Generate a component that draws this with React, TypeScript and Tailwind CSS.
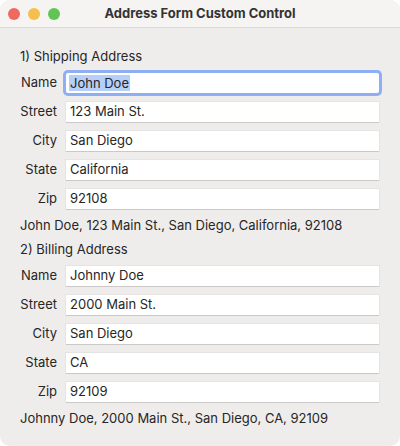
import { ReactNode } from 'react'

type Field = { label: string; value: string; focused?: boolean }

const shipping: Field[] = [
  { label: 'Name', value: 'John Doe', focused: true },
  { label: 'Street', value: '123 Main St.' },
  { label: 'City', value: 'San Diego' },
  { label: 'State', value: 'California' },
  { label: 'Zip', value: '92108' },
]

const billing: Field[] = [
  { label: 'Name', value: 'Johnny Doe' },
  { label: 'Street', value: '2000 Main St.' },
  { label: 'City', value: 'San Diego' },
  { label: 'State', value: 'CA' },
  { label: 'Zip', value: '92109' },
]

function Line({ children, className = '' }: { children: ReactNode; className?: string }) {
  return <div className={`h-4 leading-4 ${className}`}>{children}</div>
}

function FieldRow({ field }: { field: Field }) {
  return (
    <div className="flex h-5 items-center">
      <div className="w-[37px] shrink-0 text-right">{field.label}</div>
      <div
        className={
          field.focused
            ? 'ml-[9px] flex h-5 flex-1 items-center rounded-[2px] bg-white pl-[3px] shadow-[0_0_0_3px_#8eaff3]'
            : 'ml-[9px] flex h-5 flex-1 items-center bg-white pl-[3px] shadow-[0_1px_0_#cbc9c7,0_0_0_1px_#e6e4e2]'
        }
      >
        {field.focused ? (
          <span className="bg-[#b6cff8] px-px leading-4">{field.value}</span>
        ) : (
          <span className="px-px">{field.value}</span>
        )}
      </div>
    </div>
  )
}

function Section({ title, fields }: { title: string; fields: Field[] }) {
  const summary = fields.map((f) => f.value).join(', ')
  return (
    <div className="flex flex-col">
      <Line>{title}</Line>
      <div className="mt-[9px] flex flex-col gap-[9px]">
        {fields.map((f) => (
          <FieldRow key={f.label} field={f} />
        ))}
      </div>
      <Line className="mt-2">{summary}</Line>
    </div>
  )
}

export default function App() {
  return (
    <div className="h-[446px] w-[400px] bg-white font-['Inter','Liberation_Sans',sans-serif] text-[13px] text-[#262626]">
      <div className="flex h-full flex-col overflow-hidden rounded-[10px] bg-[#efedeb]">
        <div className="relative flex h-[28px] shrink-0 items-center justify-center border-b border-[#dcdad8] bg-[#f6f4f2]">
          <div className="absolute left-[8px] top-[8px] flex gap-[8px]">
            <span className="h-3 w-3 rounded-full bg-[#ee6a5e]" />
            <span className="h-3 w-3 rounded-full bg-[#f5bf4f]" />
            <span className="h-3 w-3 rounded-full bg-[#61c554]" />
          </div>
          <span className="font-bold text-[#333]">Address Form Custom Control</span>
        </div>
        <div className="flex flex-col gap-2 pl-[20px] pr-[21px] pt-[20px]">
          <Section title="1) Shipping Address" fields={shipping} />
          <Section title="2) Billing Address" fields={billing} />
        </div>
      </div>
    </div>
  )
}
